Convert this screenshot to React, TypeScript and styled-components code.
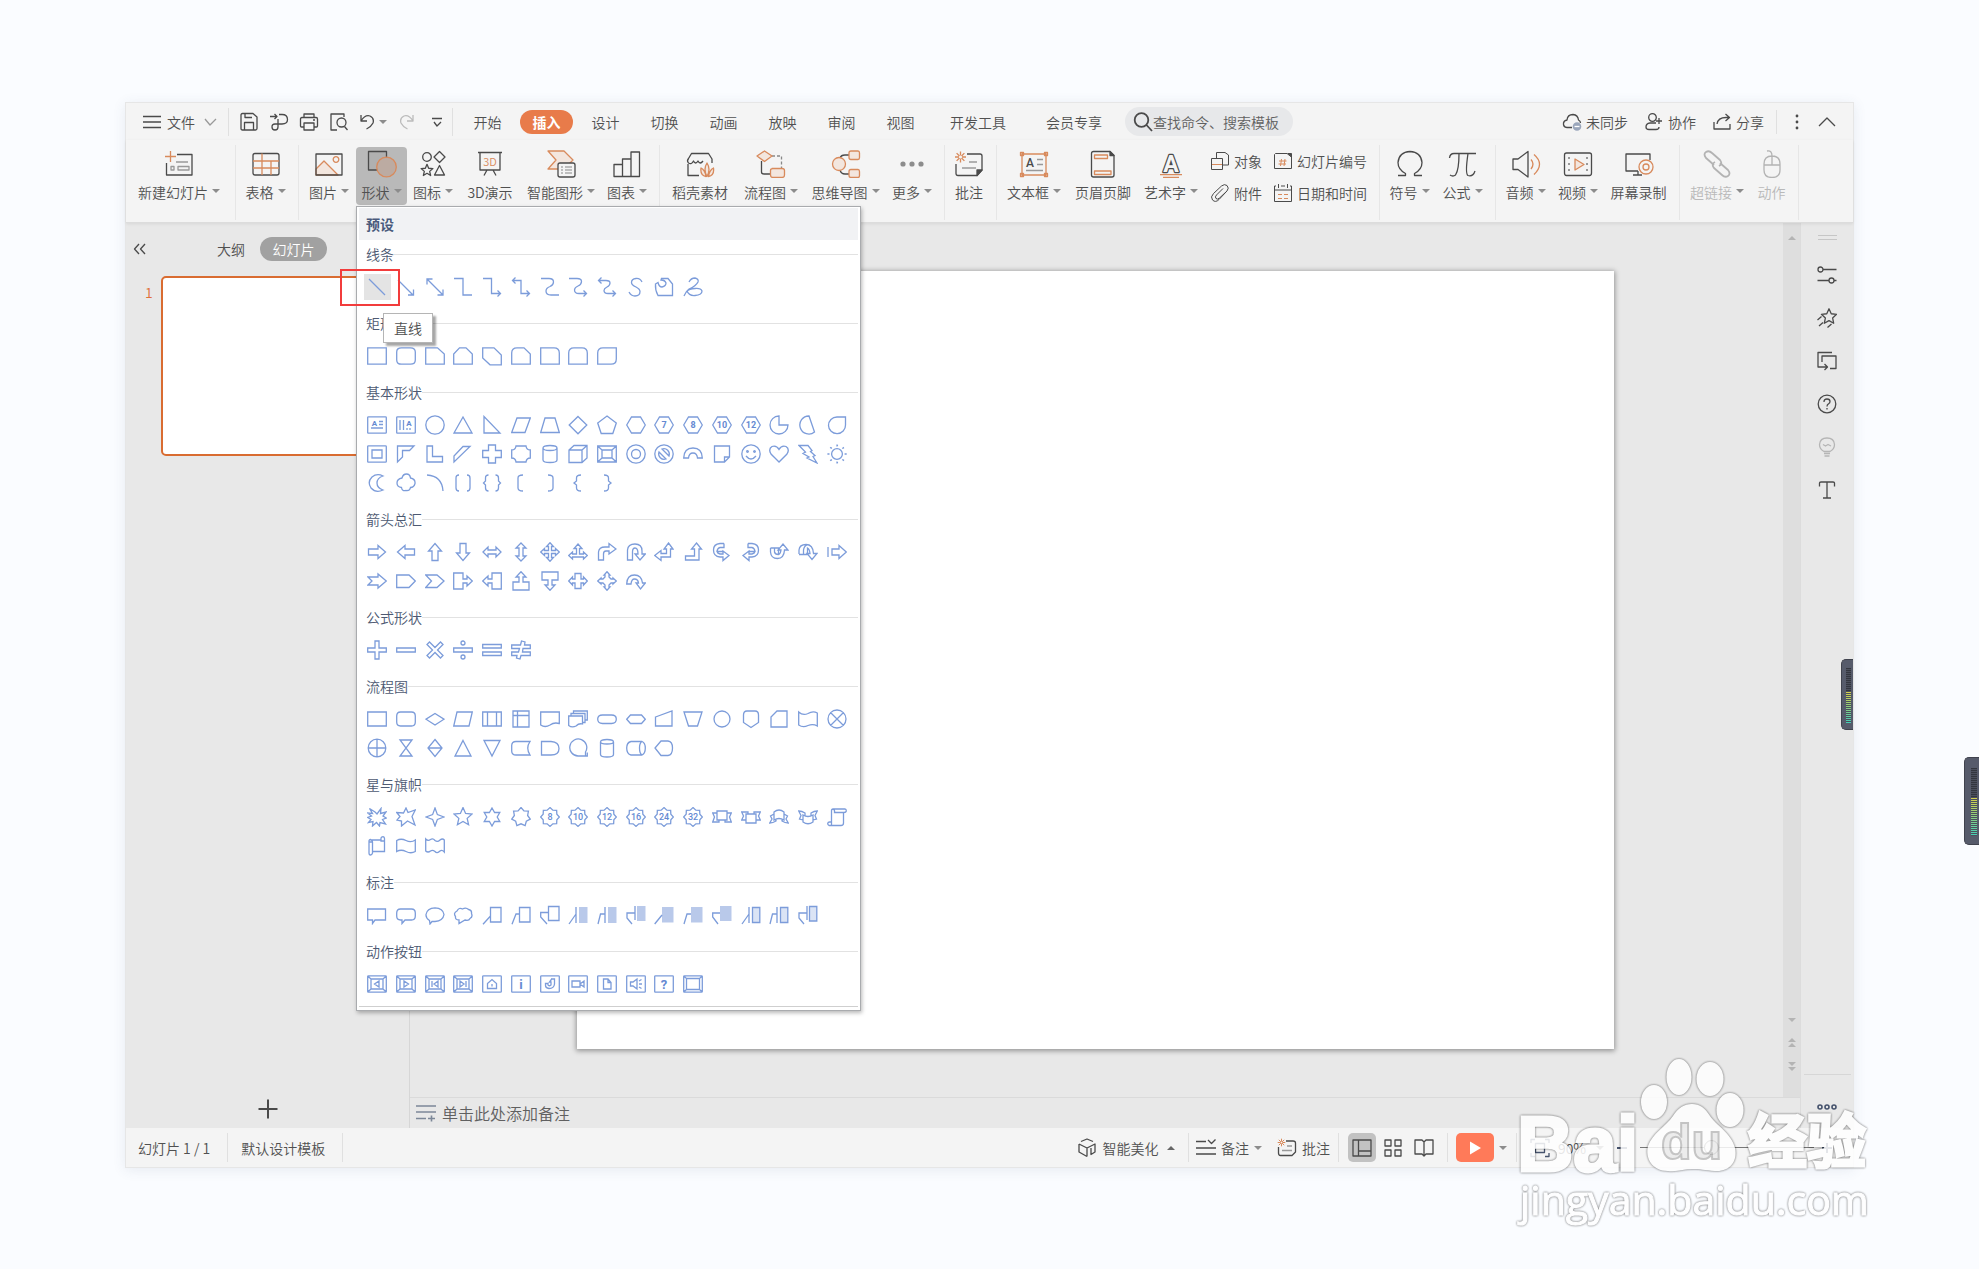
import React from 'react';
import styled, { createGlobalStyle, css } from 'styled-components';

const INK = '#4a4a4a';
const ORANGE = '#d88a5c';
const PEACH = '#f3e6de';
const BLUE = '#7c9cda';

const Global = createGlobalStyle`
  * { box-sizing: border-box; }
  body {
    margin: 0;
    background: #fafcff;
    font-family: "Noto Sans CJK SC", "Noto Sans", sans-serif;
    font-size: 14px;
    line-height: 20px;
    font-weight: 350;
    color: #505050;
  }
  button, input, select { font: inherit; color: inherit; }
  button { border: 0; padding: 0; background: none; cursor: pointer; }
  svg { display: block; flex: none; }
`;

/* ---------- page frame ---------- */

const Page = styled.div`
  position: relative;
  min-height: 100vh;
  padding: 102px 125px 101px;
  display: flex;
  overflow: hidden;
`;

const AppWindow = styled.div`
  position: relative;
  flex: 1;
  min-width: 0;
  display: flex;
  flex-direction: column;
  background: #f4f4f4;
  border: 1px solid #e6e6e6;
  box-shadow: 0 2px 12px rgba(60, 80, 120, 0.1);
`;

const Divider = styled.span<{ $h: number }>`
  flex: none;
  width: 1px;
  height: ${(p) => p.$h}px;
  background: #e0e0e0;
`;

const Caret = styled.span<{ $up?: boolean }>`
  flex: none;
  border: 4px solid transparent;
  ${(p) => (p.$up
    ? css`border-bottom-color: #666; border-top-width: 0;`
    : css`border-top-color: #8c8c8c; border-bottom-width: 0;`)}
`;

/* ---------- menu bar ---------- */

const MenuBar = styled.header`
  flex: none;
  display: flex;
  align-items: center;
  height: 37px;
  padding: 0 16px 0 17px;
`;

const FileButton = styled.button`
  display: flex;
  align-items: center;
  margin-right: 11px;
  gap: 8px;
  & > span { margin-left: -2px; }
`;

const QuickBar = styled.div`
  display: flex;
  padding-left: 5px;
`;

const QuickButton = styled.button<{ $wide?: boolean }>`
  display: flex;
  align-items: center;
  justify-content: center;
  gap: 4px;
  width: ${(p) => (p.$wide ? 38 : 30)}px;
  height: 28px;
`;

const Tabs = styled.nav`
  display: flex;
  padding: 0 3px 0 5px;
`;

const Tab = styled.button<{ $wide?: boolean; $active?: boolean }>`
  width: ${(p) => (p.$wide ? 96 : 59)}px;
  height: 24px;
  white-space: nowrap;
  ${(p) => p.$active && css`
    & > span {
      display: block;
      margin: 0 3px;
      line-height: 24px;
      border-radius: 12px;
      background: #e87b4a;
      color: #fff;
      font-weight: 700;
    }
  `}
`;

const SearchBox = styled.label`
  display: flex;
  align-items: center;
  width: 168px;
  height: 29px;
  padding-left: 8px;
  border-radius: 15px;
  background: #e7e8ea;
`;

const SearchInput = styled.input`
  flex: 1;
  min-width: 0;
  border: 0;
  padding: 0;
  background: none;
  outline: 0;
  &::placeholder { color: #606060; opacity: 1; }
`;

const AccountBar = styled.div<{ $inner?: boolean }>`
  display: flex;
  align-items: center;
  gap: ${(p) => (p.$inner ? 16 : 12)}px;
  margin-left: auto;
`;

const AccountButton = styled.button`
  display: flex;
  align-items: center;
  gap: 4px;
  white-space: nowrap;
`;

/* ---------- ribbon ---------- */

const Ribbon = styled.div`
  position: relative;
  z-index: 3;
  flex: none;
  display: flex;
  height: 83px;
  border-bottom: 1px solid #dcdcdc;
  box-shadow: 0 1px 3px rgba(0, 0, 0, 0.08);
`;

const Group = styled.div`
  display: flex;
  align-items: flex-start;
  margin: 5px 0 2px;
  padding: 2px 6px 0 3px;
  border-right: 1px solid #e6e6e6;
`;

const ToolSlot = styled.div`
  position: relative;
`;

const Tool = styled.button<{ $w: number; $active?: boolean; $off?: boolean }>`
  display: flex;
  flex-direction: column;
  align-items: center;
  gap: 4px;
  width: ${(p) => p.$w}px;
  height: 58px;
  padding-top: 3px;
  border-radius: 4px;
  white-space: nowrap;
  ${(p) => p.$active && css`background: #b9b9b9;`}
  ${(p) => p.$off && css`color: #b9b9b9;`}
`;

const ToolLabel = styled.span`
  display: flex;
  align-items: center;
  gap: 4px;
  ${Caret} { margin-top: -3px; }
`;

const SmallTools = styled.div`
  display: grid;
  grid-template-columns: 63px 100px;
  row-gap: 12px;
  margin: 4px 0 0 6px;
`;

const SmallTool = styled.button`
  display: flex;
  align-items: center;
  gap: 4px;
  height: 20px;
  white-space: nowrap;
`;

/* ---------- shape gallery ---------- */

const Gallery = styled.section`
  position: absolute;
  z-index: 5;
  top: 59px;
  left: 0;
  width: 505px;
  padding: 1px 2px 3px;
  background: #fff;
  border: 1px solid #a9abae;
  box-shadow: 1px 2px 4px rgba(0, 0, 0, 0.28);
`;

const GalleryTitle = styled.h2`
  margin: 0;
  padding: 0 7px;
  background: #f1f2f4;
  font-size: 14px;
  line-height: 32px;
  font-weight: 700;
  color: #4a5a7c;
`;

const SectionTitle = styled.h3`
  display: flex;
  align-items: center;
  margin: 0;
  padding-left: 7px;
  font-size: 14px;
  line-height: 28px;
  font-weight: 350;
  color: #4d5972;
  &::after {
    content: '';
    flex: 1;
    height: 1px;
    background: #e2e2e2;
  }
`;

const ShapeGrid = styled.div`
  display: grid;
  grid-template-columns: repeat(17, 1fr);
  row-gap: 1px;
  padding: 5px 7px 8px 4px;
`;

const ShapeButton = styled.button<{ $on?: boolean }>`
  display: flex;
  align-items: center;
  justify-content: center;
  height: 26px;
  margin: 1px;
  ${(p) => p.$on && css`background: #e4e4e4;`}
`;

const GalleryEnd = styled.div`
  height: 1px;
  background: #cfcfcf;
`;

const Marker = styled.div`
  position: absolute;
  top: 62px;
  left: -17px;
  width: 60px;
  height: 37px;
  border: 2px solid #f23c3c;
`;

const Tip = styled.div`
  position: absolute;
  top: 106px;
  left: 26px;
  padding: 4px 10px;
  background: #fff;
  border: 1px solid #b5b5b5;
  box-shadow: 3px 3px 2px rgba(0, 0, 0, 0.35);
`;

/* ---------- workspace ---------- */

const Body = styled.div`
  flex: 1;
  display: flex;
  background: #e8e8e8;
`;

const Outline = styled.aside`
  flex: none;
  display: flex;
  flex-direction: column;
  width: 284px;
  border-right: 1px solid #d6d6d6;
`;

const OutlineHead = styled.div`
  display: flex;
  align-items: center;
  height: 51px;
  padding-left: 7px;
`;

const Collapse = styled.button`
  width: 14px;
  height: 20px;
  margin-right: 70px;
`;

const OutlineTab = styled.button<{ $on?: boolean }>`
  height: 24px;
  ${(p) => p.$on && css`
    margin-left: 15px;
    width: 67px;
    border-radius: 12px;
    background: #a1a1a1;
    color: #fff;
  `}
`;

const ThumbRow = styled.div`
  display: flex;
  flex: 1;
  align-items: flex-start;
  gap: 8px;
  padding: 2px 8px 0 19px;
`;

const ThumbNumber = styled.span`
  width: 8px;
  padding-top: 6px;
  color: #e0703a;
`;

const Thumb = styled.button`
  flex: 1;
  aspect-ratio: 4 / 3;
  background: #fff;
  border: 2px solid #d96c31;
  border-radius: 5px;
`;

const AddSlide = styled.button`
  align-self: center;
  margin-bottom: 9px;
`;

const Stage = styled.main`
  flex: 1;
  min-width: 0;
  display: flex;
  flex-direction: column;
`;

const StageTop = styled.div`
  flex: 1;
  display: flex;
`;

const SlideArea = styled.div`
  flex: 1;
  display: flex;
  align-items: center;
  padding: 0 169px 0 167px;
`;

const Slide = styled.div`
  flex: 1;
  aspect-ratio: 4 / 3;
  background: #fff;
  box-shadow: 0 1px 5px 1px rgba(0, 0, 0, 0.36);
`;

const ScrollTrack = styled.div`
  display: flex;
  flex-direction: column;
  align-items: center;
  width: 17px;
  padding: 12px 0 26px;
  gap: 15px;
  background: #dedede;
  color: #b4b4b4;
  & > :first-child { margin-bottom: auto; }
`;

const Notes = styled.label`
  display: flex;
  align-items: center;
  gap: 6px;
  height: 31px;
  padding-left: 6px;
  border-top: 1px solid #dadada;
`;

const NotesInput = styled.input`
  flex: 1;
  border: 0;
  padding: 0;
  background: none;
  outline: 0;
  font-size: 16px;
  &::placeholder { color: #606060; opacity: 1; }
`;

const SideBar = styled.aside`
  flex: none;
  display: flex;
  flex-direction: column;
  align-items: center;
  width: 53px;
  border-left: 1px solid #dcdcdc;
`;

const SideGrip = styled.div`
  width: 19px;
  height: 5px;
  margin: 12px 0 13px;
  border: solid #c6c6c6;
  border-width: 1px 0;
`;

const SideButton = styled.button`
  display: flex;
  align-items: center;
  justify-content: center;
  width: 36px;
  height: 43px;
`;

const SideFoot = styled.div`
  display: flex;
  justify-content: center;
  width: 47px;
  height: 54px;
  margin-top: auto;
  padding-top: 28px;
  border-top: 1px solid #d6d6d6;
`;

/* ---------- status bar ---------- */

const StatusBar = styled.footer`
  flex: none;
  display: flex;
  align-items: center;
  height: 39px;
  padding: 0 21px 0 12px;
  white-space: nowrap;
`;

const StatusText = styled.span`
  padding-right: 17px;
  ${Divider} + & { padding-left: 13px; }
`;

const StatusTools = styled.div`
  display: flex;
  align-items: center;
  margin-left: auto;
`;

const StatusButton = styled.button<{ $w: number; $on?: boolean }>`
  display: flex;
  align-items: center;
  justify-content: center;
  gap: 5px;
  width: ${(p) => p.$w}px;
  height: 29px;
  border-radius: 5px;
  ${(p) => p.$on && css`background: #c2c2c2;`}
`;

const ViewSwitch = styled.div`
  display: flex;
  gap: 3px;
  padding: 0 9px;
`;

const PlayGroup = styled.div`
  display: flex;
  align-items: center;
  gap: 5px;
  padding: 0 9px 0 8px;
`;

const PlayButton = styled.button`
  display: flex;
  align-items: center;
  justify-content: center;
  width: 38px;
  height: 29px;
  border-radius: 5px;
  background: #ff7a59;
`;

const ZoomTools = styled.div`
  display: flex;
  align-items: center;
  gap: 8px;
  padding-left: 13px;
`;

const ZoomSelect = styled.select`
  appearance: none;
  width: 30px;
  border: 0;
  padding: 0;
  background: none;
`;

const ZoomRange = styled.input`
  appearance: none;
  width: 174px;
  height: 16px;
  margin: 0;
  background: linear-gradient(#777, #777) center / 100% 1px no-repeat;
  &::-webkit-slider-thumb {
    appearance: none;
    width: 15px;
    height: 15px;
    border: 1px solid #555;
    border-radius: 50%;
    background: #f4f4f4;
  }
`;

/* ---------- level meters ---------- */

const Meter = styled.div<{ $page?: boolean }>`
  position: absolute;
  z-index: 4;
  right: 0;
  top: ${(p) => (p.$page ? 757 : 556)}px;
  width: ${(p) => (p.$page ? 15 : 12)}px;
  height: ${(p) => (p.$page ? 88 : 71)}px;
  padding: ${(p) => (p.$page ? '10px 2px 8px 6px' : '8px 2px 6px 4px')};
  border: solid #40434e;
  border-width: 1px 0 1px 1px;
  border-radius: 5px 0 0 5px;
  background: #565b6b;
`;

const MeterBars = styled.div`
  height: 100%;
  background:
    repeating-linear-gradient(transparent 0 1px, #4b4f5c 1px 2px),
    linear-gradient(#33363f 0 43%, #d8d04a 43%, #8fce7c 70%, #43cdb8);
`;

/* ---------- watermark ---------- */

const Watermark = styled.div`
  position: absolute;
  z-index: 6;
  right: 104px;
  bottom: 36px;
  width: 358px;
  height: 176px;
  pointer-events: none;
  font-weight: 700;
  color: #fff;
  opacity: 0.85;
  filter: drop-shadow(0 0 1px rgba(0, 0, 0, 0.4)) drop-shadow(0 0 1px rgba(0, 0, 0, 0.3));
`;

const MarkWord = styled.span<{ $x: number; $y: number; $size: number; $latin?: boolean }>`
  position: absolute;
  left: ${(p) => p.$x}px;
  top: ${(p) => p.$y}px;
  font-size: ${(p) => p.$size}px;
  line-height: 1;
  -webkit-text-stroke: 3px #fff;
  ${(p) => p.$latin && css`font-family: "Liberation Sans", Arial, sans-serif;`}
`;

const MarkInner = styled(MarkWord)`
  color: #ebebeb;
  -webkit-text-stroke: 2px #bdbdbd;
`;

const MarkUrl = styled.span`
  position: absolute;
  left: 3px;
  bottom: 14px;
  font-family: "Open Sans", "Noto Sans", sans-serif;
  font-size: 41px;
  line-height: 40px;
  font-weight: 400;
  white-space: nowrap;
  -webkit-text-stroke: 1px #fff;
`;

const MarkPaw = styled.svg`
  position: absolute;
  left: 123px;
  top: 1px;
`;

/* ---------- line icon primitives ---------- */

type P = React.SVGProps<SVGPathElement>;
const K = (p: P) => <path {...p} />;
const O = (p: P) => <path stroke={ORANGE} {...p} />;

const Big = ({ children, color = INK }: { children: React.ReactNode; color?: string }) => (
  <svg width="30" height="28" viewBox="0 0 30 28" fill="none" stroke={color} strokeWidth="1.3" strokeLinejoin="round" aria-hidden>{children}</svg>
);
const Sm = ({ children, w = 20, color = INK }: { children: React.ReactNode; w?: number; color?: string }) => (
  <svg width={w} height="20" viewBox={`0 0 ${w} 20`} fill="none" stroke={color} strokeWidth="1.3" strokeLinejoin="round" aria-hidden>{children}</svg>
);

const n = (v: number) => Math.round(v * 100) / 100;
const circ = (x: number, y: number, r: number, ry = r) =>
  `M${x - r} ${y}a${r} ${ry} 0 1 0 ${2 * r} 0a${r} ${ry} 0 1 0 ${-2 * r} 0Z`;
const star = (k: number, R: number, r: number, rot = -90, cx = 10, cy = 10) => {
  const pts: string[] = [];
  for (let i = 0; i < k * 2; i += 1) {
    const a = ((rot + (i * 180) / k) * Math.PI) / 180;
    const d = i % 2 ? r : R;
    pts.push(`${n(cx + d * Math.cos(a))} ${n(cy + d * Math.sin(a))}`);
  }
  return `M${pts.join('L')}Z`;
};
const rays = (k: number, a: number, b: number, cx: number, cy: number) => {
  let d = '';
  for (let i = 0; i < k; i += 1) {
    const t = (i * 2 * Math.PI) / k;
    d += `M${n(cx + a * Math.cos(t))} ${n(cy + a * Math.sin(t))}L${n(cx + b * Math.cos(t))} ${n(cy + b * Math.sin(t))}`;
  }
  return d;
};

/* ---------- ribbon data ---------- */

const icons: Record<string, React.ReactNode> = {
  newSlide: <Big><K d="M13 4.500H28V25H2.500V13" /><K stroke="#999" d="M12 12H24M7 16.500H10V20H7ZM14 16.500H25V20H14Z" /><O d="M6.500 1V12M1 6.500H12" /></Big>,
  table: <Big><K d="M4 3.500H26Q28 3.500 28 5.500V23Q28 25 26 25H4Q2 25 2 23V5.500Q2 3.500 4 3.500Z" /><O d="M2 11H28M2 18H28M11 3.500V25M20 11V25" /></Big>,
  picture: <Big><O fill={PEACH} d="M2 19L10 11L24 25H2Z" /><O d={circ(22, 9.5, 2.8)} /><K d="M2 4H28V25H2Z" /></Big>,
  shapes: <Big><K fill="#b0b0b0" d="M1.500 1.500H19.500V20H1.500Z" /><O fill="#bcaba2" d={circ(19.5, 17, 9.8)} /></Big>,
  iconSet: <Big><K d={circ(9, 7, 4.3)} /><K d="M21.500 1.500L27 7 21.500 12.500 16 7Z" /><K d={star(5, 6.2, 2.8, -90, 9, 20.5)} /><K d="M21.500 15.500L26.500 25H16.500Z" /></Big>,
  board: <Big><K d="M3 2.500H27M5 2.500V20H25V2.500M12 20L9 25.500M18 20L21 25.500" /><text x="15" y="15.500" fontSize="11" textAnchor="middle" fill={ORANGE} stroke="none">3D</text></Big>,
  smart: <Big><O fill={PEACH} d="M2 1H18L27 10L18 19H2L10 10Z" /><K fill="#f4f4f4" d="M14 13H27Q29 13 29 15V25Q29 27 27 27H14Q12 27 12 25V15Q12 13 14 13Z" /><K strokeWidth="1" stroke="#888" d="M15 17H17M19 17H26M15 20H17M19 20H26M15 23H17M19 23H26" /></Big>,
  chart: <Big><K d="M2 14.500H10.500V26.500H2ZM10.500 9H19V26.500H10.500ZM19 2H27.500V26.500H19Z" /></Big>,
  shop: <Big><K d="M3 14V25.500H14M3.500 13Q1.500 11 3.500 8.500L6.500 3.500H23.500L27 9V13M3.500 13Q6.500 15 8.500 11Q10.500 15 13 11Q15 15 18 11" /><O fill={PEACH} d="M22 13Q26 19 22 26.500Q18 19 22 13ZM16 18Q20 20 21 26.500Q15 25.500 16 18ZM28.500 18Q24.500 20 23.500 26.500Q29.500 25.500 28.500 18Z" /></Big>,
  flow: <Big><K d="M5.500 11V22Q5.500 24 8 24H15" /><K strokeDasharray="3 2" stroke="#888" d="M16 6H25.500V18" /><O fill={PEACH} d="M8.500 1L16 6L8.500 11.500L1 6ZM16 18.500H26Q28.500 18.500 28.500 20.500V25Q28.500 27.500 26 27.500H17Q14.500 27.500 14.500 25V20.500Q14.500 18.500 17 18.500Z" /></Big>,
  mind: <Big><K d="M9 8Q10 5 14 5H19M9 20Q10 24 14 24H19" /><O fill={PEACH} d={`${circ(8, 14, 6.5)}M20 1H27Q28.500 1 28.500 3V7.500Q28.500 9.500 27 9.500H20Q18 9.500 18 7.500V3Q18 1 20 1ZM20 19.500H27Q28.500 19.500 28.500 21.500V25.500Q28.500 27.500 27 27.500H20Q18 27.500 18 25.500V21.500Q18 19.500 20 19.500Z`} /></Big>,
  more: <Big><K fill="#8c8c8c" stroke="none" d={circ(6, 14, 2.6) + circ(15, 14, 2.6) + circ(24, 14, 2.6)} /></Big>,
  comment: <Big><K d="M13 4H26Q28 4 28 6V20L23 25.500H4Q2 25.500 2 23.500V14" /><K fill={INK} d="M28 20H23V25.500Z" /><K stroke="#999" d="M15 12H23M8 18H22" /><O d={rays(8, 1.5, 5.5, 6.5, 7)} /></Big>,
  textBox: <Big><O d="M3 4H27V25H3ZM1.500 2.500H4.500V5.500H1.500ZM25.500 2.500H28.500V5.500H25.500ZM1.500 23.500H4.500V26.500H1.500ZM25.500 23.500H28.500V26.500H25.500Z" /><text x="11" y="17" fontSize="12" fontFamily="Roboto, sans-serif" fontWeight="500" textAnchor="middle" fill={INK} stroke="none">A</text><K stroke="#999" d="M18 9.500H24M18 14.500H24M7 20.500H24" /></Big>,
  header: <Big><K d="M5.500 1.500H22L26 5.500V25Q26 27 24 27H5.500Q3.500 27 3.500 25V3.500Q3.500 1.500 5.500 1.500Z" /><K fill={INK} d="M22 1.500V5.500H26Z" /><O d="M6.500 5H19.500V8.500H6.500ZM6.500 21H23V24.500H6.500Z" /></Big>,
  wordArt: <Big><text x="15" y="22" fontSize="23" fontFamily="Roboto, sans-serif" fontWeight="700" textAnchor="middle" fill="#f4f4f4" strokeWidth="2.4" paintOrder="stroke">A</text><O d="M4 24.700H26M7 27.300H23" /></Big>,
  omega: <Big><K d="M3 25.500H10.500V23.500Q3 19.500 3 12.500Q4 2 15 1.500Q26 2 27 12.500Q27 19.500 19.500 23.500V25.500H27" /></Big>,
  pi: <Big><K d="M1.500 8Q2 3.500 6 3.500H28M11 3.500Q11 20 7.500 25Q5 27 2 25M20 3.500Q17 24 20 25.500Q25 27 27 21" /></Big>,
  audio: <Big><K d="M2 9H7L17 1.500V27L7 19.500H2Z" /><O d="M20 9.500Q24 14 20 19M23 4.500Q34 14 23 24.500" /></Big>,
  video: <Big><K d="M3.500 3H26.500Q28.500 3 28.500 5V23Q28.500 25.500 26.500 25.500H3.500Q1.500 25.500 1.500 23V5Q1.500 3 3.500 3Z" /><O fill={PEACH} d="M12 9V20L21 14.500Z" /><K strokeWidth="2" stroke="#999" d="M5 8H7M5 14H7M5 20H7M23 8H25M23 14H25M23 20H25" /></Big>,
  record: <Big><K d="M26 10V4H2V21H14M14 21V25M9 25H18" /><O d={circ(22, 17, 7) + circ(22, 17, 3)} /></Big>,
  link: <Big color="#b3b3b3"><K strokeWidth="1.8" d="M12 15L4 8Q1 4 4 2Q7 0 10 3L18 10Q21 14 17 16M18 13L26 20Q29 24 26 26Q23 28 20 25L12 18Q9 14 13 12" /></Big>,
  mouse: <Big color="#b3b3b3"><K d="M15 6Q23 6 23 14V20Q23 27.500 15 27.500Q7 27.500 7 20V14Q7 6 15 6ZM7 15H23M15 6V15M10 1Q15 0 15 6" /></Big>,
};

interface ToolDef { label: string; icon: string; w: number; menu?: boolean; active?: boolean; off?: boolean }

const groups: ToolDef[][] = [
  [{ label: '新建幻灯片', icon: 'newSlide', w: 100, menu: true }],
  [{ label: '表格', icon: 'table', w: 53, menu: true }],
  [
    { label: '图片', icon: 'picture', w: 54, menu: true },
    { label: '形状', icon: 'shapes', w: 51, menu: true, active: true },
    { label: '图标', icon: 'iconSet', w: 52, menu: true },
    { label: '3D演示', icon: 'board', w: 62 },
    { label: '智能图形', icon: 'smart', w: 80, menu: true },
    { label: '图表', icon: 'chart', w: 52, menu: true },
  ],
  [
    { label: '稻壳素材', icon: 'shop', w: 74 },
    { label: '流程图', icon: 'flow', w: 68, menu: true },
    { label: '思维导图', icon: 'mind', w: 81, menu: true },
    { label: '更多', icon: 'more', w: 52, menu: true },
  ],
  [{ label: '批注', icon: 'comment', w: 42 }],
  [
    { label: '文本框', icon: 'textBox', w: 68, menu: true },
    { label: '页眉页脚', icon: 'header', w: 70 },
    { label: '艺术字', icon: 'wordArt', w: 66, menu: true },
  ],
  [
    { label: '符号', icon: 'omega', w: 53, menu: true },
    { label: '公式', icon: 'pi', w: 53, menu: true },
  ],
  [
    { label: '音频', icon: 'audio', w: 53, menu: true },
    { label: '视频', icon: 'video', w: 52, menu: true },
    { label: '屏幕录制', icon: 'record', w: 69 },
  ],
  [
    { label: '超链接', icon: 'link', w: 68, menu: true, off: true },
    { label: '动作', icon: 'mouse', w: 41, off: true },
  ],
];

const smallTools = [
  { label: '对象', icon: <Sm><K strokeWidth="1" d="M6.500 7V1.500H15L18.500 4V14H13M1.500 7.500H12.500V18.500H1.500Z" /><O strokeWidth="1" d="M2 13.500H12" /></Sm> },
  { label: '幻灯片编号', icon: <Sm><K strokeWidth="1" d="M2.500 2.500H14L18.500 6V17.500H1.500V3.500Z" /><K fill={INK} strokeWidth="1" d="M15 2.500H18.500V6Z" /><O strokeWidth="1" d="M8.500 8L7.500 15M12 8L11 15M6 10H13.500M5.500 13H13" /></Sm> },
  { label: '附件', icon: <Sm><K strokeWidth="1" d="M16 9L9 16.500Q5.500 20 2.500 17Q0 14 3.500 10.500L11.500 3Q14.500 .5 17 2.500Q19.500 5 17 8L9.500 15Q7.500 17 6 15.500Q4.500 14 6.500 12L13 5.500" /></Sm> },
  { label: '日期和时间', icon: <Sm><K strokeWidth="1" d="M3 3H1.500V18.500H18.500V3H17M8 3H12M5.500 1V5M14.500 1V5M1.500 7H18.500" /><O strokeWidth="1" d="M5 11.500H9M11 11.500H15M5 15.500H9M11 15.500H15" /></Sm> },
];

/* ---------- gallery data ---------- */

interface Shape { d: string; t?: string; f?: string; o?: string; small?: boolean; ty?: number }
const s = (d: string, t?: string, small?: boolean): Shape => ({ d, t, small });
const HEX = 'M5.500 2H14.500L19.300 10 14.500 18H5.500L.7 10Z';
const BOX = 'M1.500 1.800H18.500Q19.300 1.800 19.300 2.600V17.400Q19.300 18.200 18.500 18.200H1.500Q.7 18.200 .7 17.400V2.600Q.7 1.800 1.500 1.800Z';
const BEVEL = `${BOX}M4 5H16V15H4ZM.7 2L4 5M19.300 2L16 5M.7 18L4 15M19.300 18L16 15`;
const BADGE = star(8, 9.4, 7.4);

const sections: { title: string; shapes: Shape[] }[] = [
  {
    title: '线条',
    shapes: [
      s('M2 2L18 18'),
      s('M2 3L17 18M17.500 12.500V18H12'),
      s('M2 2L18 18M18 12.500V18H12.500M2 7.500V2H7.500'),
      s('M1 1.500H10V18H19'),
      s('M1 1.500H9.500V16.500H18.500M15.500 13.500L18.500 16.500 15.500 19.500'),
      s('M1.500 3.500H10V16.500H18.500M4.500 .5L1.500 3.500 4.500 6.500M15.500 13.500L18.500 16.500 15.500 19.500'),
      s('M1 1.500H9Q13.500 1.500 13.500 5Q13.500 8 10 9.500Q6 11 6 14Q6 18 11 18H19'),
      s('M1 1.500H9Q13.500 1.500 13.500 4.500Q13.500 7.500 10 9Q6.500 10.500 6.500 13Q6.500 16.500 11 16.500H18.500M15.500 13.500L18.500 16.500 15.500 19.500'),
      s('M1.500 3.500H9Q13 3.500 13 6Q13 8.500 10 10Q7 11.500 7 13.500Q7 16.500 11 16.500H18.500M4.500 .5L1.500 3.500 4.500 6.500M15.500 13.500L18.500 16.500 15.500 19.500'),
      s('M16 5Q14 1 10 1.500Q5.500 2 5.500 5.500Q5.500 8 10 10Q14 12 14 14.500Q14 19 9 19Q5 19 3 15'),
      s('M1.500 7L4 5.500Q5 10 8 10Q12 9 12 6Q11 3 7 3L7.500 1.500H14L18.500 7V18.500H4Q1 13 1.500 7Z'),
      s('M6 5Q8 1 12 1Q16 2 15 5Q13 9 6 12Q3 14 1 19M4 14Q6 19 12 18.500Q19 18 19 14Q18 11 12 11.500Q6 12 4 14'),
    ],
  },
  {
    title: '矩形',
    shapes: [
      s('M.7 1.800H19.300V18.200H.7Z'),
      s('M5.500 1.800H14.500Q19.300 1.800 19.300 6V14Q19.300 18.200 14.500 18.200H5.500Q.7 18.200 .7 14V6Q.7 1.800 5.500 1.800Z'),
      s('M.7 1.800H12.500L19.300 8V18.200H.7Z'),
      s('M6.500 1.800H13L19.300 8V18.200H.7V8Z'),
      s('M.7 1.800H12L19.300 9V18.800H8L.7 12Z'),
      s('M6 1.800H13L19.300 8V18.200H.7V7Q.7 1.800 6 1.800Z'),
      s('M.7 1.800H14Q19.300 1.800 19.300 7V18.200H.7Z'),
      s('M6 1.800H14Q19.300 1.800 19.300 7V18.200H.7V7Q.7 1.800 6 1.800Z'),
      s('M6 1.800H19.300V13Q19.300 18.200 14 18.200H.7V7Q.7 1.800 6 1.800Z'),
    ],
  },
  {
    title: '基本形状',
    shapes: [
      { d: `${BOX}M12 6.500H16M12 9.500H16M4 13H16`, t: 'A', o: '7.5', ty: 11 },
      { d: `${BOX}M4 5V15M7.500 5V15M11 13V15M14 13V15`, t: 'A', o: '13', ty: 11 },
      s(circ(10, 10, 9.2)),
      s('M10 2L19 18H1Z'),
      s('M2 1.500V18H18Z'),
      s('M6 3H19.300L14 17.500H.7Z'),
      s('M5 3H15L19.300 17.500H.7Z'),
      s('M10 1.500L18.800 10 10 18.800 1.200 10Z'),
      s('M10 1L19.300 8 15.800 18.500H4.200L.7 8Z'),
      s(HEX), s(HEX, '7'), s(HEX, '8'), s(HEX, '10'), s(HEX, '12'),
      s('M10 1A9 9 0 1 0 19 10H10Z'),
      s('M11 1A9 9 0 1 0 16.500 17Z'),
      s('M10 2H18.500V10A8.500 8.300 0 1 1 10 2Z'),
      s(`${BOX}M5 6H15V14H5Z`),
      s('M1.500 2H18L13.500 6.500H6.500V13L1.500 18Z'),
      s('M2 2H7.500V12.500H17.500V18H2Z'),
      s('M1 18V12L10 2.500H17Z'),
      s('M6.500 1H13.500V6.500H19.300V13.500H13.500V19H6.500V13.500H.7V6.500H6.500Z'),
      s('M5 2H15Q15.500 6 19.300 6V14Q15.500 14 15 18H5Q4.500 14 .7 14V6Q4.500 6 5 2Z'),
      s('M3 4Q3 1.500 10 1.500Q17 1.500 17 4V16Q17 18.500 10 18.500Q3 18.500 3 16ZM3 4Q3 6.500 10 6.500Q17 6.500 17 4'),
      s('M1 6L6 1.500H19V14L14 18.500H1ZM1 6H14V18.500M14 6L19 1.500'),
      s('M.7 2H19.300V18H.7ZM5 6H15V14H5ZM.7 2L5 6M19.300 2L15 6M.7 18L5 14M19.300 18L15 14'),
      s(circ(10, 10, 9.2) + circ(10, 10, 4.5)),
      s(`${circ(10, 10, 9.2)}M5 8A5.500 5.500 0 0 0 12 15ZM8 5A5.500 5.500 0 0 1 15 12Z`),
      s('M.7 14Q1 4 10 4Q19 4 19.300 14H14.500Q14 9 10 9Q6 9 5.500 14Z'),
      s('M2.500 2H17.500V13L12.500 18H2.500ZM12.500 18V13H17.500'),
      s(`${circ(10, 10, 9.2)}${circ(6.5, 7.5, .8)}${circ(13.5, 7.5, .8)}M5 12Q10 18 15 12`),
      s('M10 18L2 10Q-1 5 3 2.500Q7.500 1 10 5.500Q12.500 1 17 2.500Q21 5 18 10Z'),
      s('M1 1.500H10L14 6.500L12.500 7.500L17 11.500L15 12.500L19 19L9 14L11 13L5 9.500L7.500 8Z'),
      { d: circ(10, 10, 5.4) + rays(8, 7.6, 9.6, 10, 10) + rays(8, 7.9, 9.3, 10.4, 10) },
      s('M16 3Q10 0 5 4Q0 9 4 15Q9 20.500 16 17Q10 15 10 10Q10 5 16 3Z'),
      s('M6 5Q7 1 10.500 1Q14 1 14.500 5Q19.500 6 19 10.500Q18 14.500 14.500 14.500Q14 18 10 17.500Q6 18.500 5.500 14.500Q1 14 1 10Q1 6 6 5Z'),
      s('M2 2Q17 3 18 18'),
      s('M6 2Q3 2 3 5V15Q3 18 6 18M14 2Q17 2 17 5V15Q17 18 14 18'),
      s('M6.500 2Q3.500 2 3.500 5V8L1.500 10L3.500 12V15Q3.500 18 6.500 18M13.500 2Q16.500 2 16.500 5V8L18.500 10L16.500 12V15Q16.500 18 13.500 18'),
      s('M12 2Q7 2 7 5V15Q7 18 12 18'),
      s('M8 2Q13 2 13 5V15Q13 18 8 18'),
      s('M13 2Q8.500 2 8.500 5V8L6 10L8.500 12V15Q8.500 18 13 18'),
      s('M7 2Q11.500 2 11.500 5V8L14 10L11.500 12V15Q11.500 18 7 18'),
    ],
  },
  {
    title: '箭头总汇',
    shapes: [
      s('M1.500 7H11V3.500L18.500 10 11 16.500V13H1.500Z'),
      s('M18.500 7H9V3.500L1.500 10 9 16.500V13H18.500Z'),
      s('M7 18.500V9H3.500L10 1.500 16.500 9H13V18.500Z'),
      s('M7 1.500V11H3.500L10 18.500 16.500 11H13V1.500Z'),
      s('M1 10L6 5V8H14V5L19 10 14 15V12H6V15Z'),
      s('M10 1L15 6H12V14H15L10 19 5 14H8V6H5Z'),
      s('M10 .7L13.500 4.500H11.500V8.500H15.500V6.500L19.300 10L15.500 13.500V11.500H11.500V15.500H13.500L10 19.300L6.500 15.500H8.500V11.500H4.500V13.500L.7 10L4.500 6.500V8.500H8.500V4.500H6.500Z'),
      s('M10 2L14 6.500H11.500V12H15.500V10L19.300 13.500L15.500 17V15H4.500V17L.7 13.500L4.500 10V12H8.500V6.500H6Z'),
      s('M1.500 18V10Q2 5 8 5H12V1.500L19 7L12 12V9H9Q6.500 9 6.500 12V18Z'),
      s('M1.500 18V8Q2 2 9 2Q16 2 16 9V12H19.300L14 18L9 12H12Q12 6 9 6Q6.500 6 6.500 10V18ZM6.500 11V14'),
      s('M14.500 1L19 7H16.500V15H7V18.500L.7 13.500L7 8.500V11.500H12.500V7H10Z'),
      s('M13.500 1L18.500 7H16V18H2.500V14H11.500V7H8.500Z'),
      s('M12 1.500H8Q1.500 2 1.500 8Q1.500 14.500 8 15H11V18.500L17 13.500L11 9V12H8Q5.500 11.500 5 9.500H12M12 1.500V5.500H8Q5.500 6 5 9.500'),
      s('M7 1.500H11Q17.500 2 17.500 8Q17.500 14.500 11 15H8V18.500L2 13.500L8 9V12H11Q13.500 11.500 14 9.500H7M7 1.500V5.500H11Q13.500 6 14 9.500'),
      s('M1.500 6V10Q2 16.500 8.500 16.500Q15 16.500 15.500 8H19L14 2L9 8H12Q11.500 12 9.500 12.500V6H5.500V10Q6 12.500 9.500 12.500M1.500 6H5.500'),
      s('M1 12V8Q1.500 2.500 8 2.500Q15 2.500 15.500 11.500H19L14 17.500L9 11.500H12Q11.500 7 9.500 6V12.500H5.500V8Q6 4 9.500 2.600M1 12.500H5.500'),
      s('M1 5V15M5 7H12V3.500L19.300 10L12 16.500V13H5Z'),
      s('M1 6H11V3L19.300 10L11 17V14H1L5 10Z'),
      s('M.7 4H13L19.300 10L13 16.500H.7Z'),
      s('M.7 4H12L19 10L12 16.500H.7L6.500 10Z'),
      s('M.7 2H10V8H14V5L19.300 10L14 15V12H10V18H.7Z'),
      s('M19.300 2H10V8H6V5L.7 10L6 15V12H10V18H19.300Z'),
      s('M2 19V11H8V6H5L10 .7L15 6H12V11H18V19Z'),
      s('M2 1V9H8V14H5L10 19.300L15 14H12V9H18V1Z'),
      s('M7 2.500H13V8H15.500V6L19.300 10L15.500 14V12H13V17.500H7V12H4.500V14L.7 10L4.500 6V8H7Z'),
      s('M10 .7L13 4H12V6L14 8H16V7L19.300 10L16 13V12H14L12 14V16H13L10 19.300L7 16H8V14L6 12H4V13L.7 10L4 7V8H6L8 6V4H7Z'),
      s('M.7 13Q1 4 8.500 4Q15.500 4 16.500 12H19.300L14.500 18L10 12H12.500Q12 8 8.500 8Q5.500 8 5 13Z'),
    ],
  },
  {
    title: '公式形状',
    shapes: [
      s('M8 1H12V8H19.300V12H12V19H8V12H.7V8H8Z'),
      s('M.7 8H19.300V12H.7Z'),
      s('M4.500 2L10 7.500L15.500 2L18 4.500L12.500 10L18 15.500L15.500 18L10 12.500L4.500 18L2 15.500L7.500 10L2 4.500Z'),
      s(`M.7 8H19.300V12H.7Z${circ(10, 3, 2)}${circ(10, 17, 2)}`),
      s('M.7 4.500H19.300V8H.7ZM.7 12H19.300V15.500H.7Z'),
      s('M.7 5H9.500L10.500 1L14 2L13.500 5H19.300V8.500H12L11.500 12H19.300V15.500H10L9 19L5.500 18L6 15.500H.7V12H7.500L8.500 8.500H.7Z'),
    ],
  },
  {
    title: '流程图',
    shapes: [
      s('M.7 3H19.300V17H.7Z'),
      s('M4.500 3H15.500Q19.300 3 19.300 7V13Q19.300 17 15.500 17H4.500Q.7 17 .7 13V7Q.7 3 4.500 3Z'),
      s('M10 4.500L19 10.200L10 16L1 10.200Z'),
      s('M4 3H19.300L16 17H.7Z'),
      s('M.7 3H19.300V17H.7ZM5.500 3V17M14.500 3V17'),
      s('M2 2H18V18H2ZM6.500 2V18M2 6.500H18'),
      s('M.7 3H19.300V14.500Q14 13 10 16Q5 19 .7 16Z'),
      s('M.7 7H14.500V15Q11 14 8 17Q4 19 .7 16.500ZM3 7V4.500H17V13.500H14.500M5.500 4.500V2H19.300V11H17'),
      s('M5.500 6H14.500Q19.300 6 19.300 10Q19.300 14.500 14.500 14.500H5.500Q.7 14.500 .7 10Q.7 6 5.500 6Z'),
      s('M4.500 6H15.500L19.300 10.200L15.500 14.500H4.500L.7 10.200Z'),
      s('M1.500 8L18 2V17H1.500Z'),
      s('M1 3H19L14.500 17H5.500Z'),
      s(circ(10, 10, 8)),
      s('M6 2H14Q17.500 2 17.500 6V13.500L10 18.500L2.500 13.500V6Q2.500 2 6 2Z'),
      s('M8 2H18V18H2V8Z'),
      s('M.7 3Q5 7 10 4.500Q15 1.500 19.300 4V17Q15 14.500 10 16.500Q5 19 .7 16Z'),
      s(`${circ(10, 10, 9)}M3.500 3.500L16.500 16.500M16.500 3.500L3.500 16.500`),
      s(`${circ(10, 10, 8.8)}M1 10H19M10 1V19`),
      s('M4 2H16L4 18H16Z'),
      s('M10 1.500L17 10L10 18.500L3 10ZM3 10H17'),
      s('M10 2.500L18 18H2Z'),
      s('M2 2.500H18L10 18Z'),
      s('M5 3.500H19Q14.500 10 19 17H5Q.7 17 .7 13V7.500Q.7 3.500 5 3.500Z'),
      s('M1.500 3.500H11Q19 4 19 10.500Q19 17 11 17H1.500Z'),
      s('M10 18A8.500 8.500 0 1 1 17.500 14V18ZM10 18H19.300V14.500'),
      s('M3.500 4Q3.500 1.500 10 1.500Q16.500 1.500 16.500 4V16.500Q16.500 19 10 19Q3.500 19 3.500 16.500ZM3.500 4Q3.500 6 10 6Q16.500 6 16.500 4'),
      s('M5 3.500H16Q19.300 5 19.300 10Q19.300 15.500 16 17H5Q.7 16 .7 10Q.7 4.500 5 3.500ZM16 3.500Q13.500 5 13.500 10Q13.500 15.500 16 17'),
      s('M7 3H14Q18.500 3.500 18.500 10Q18.500 17 14 17.500H7L1 10Z'),
    ],
  },
  {
    title: '星与旗帜',
    shapes: [
      s('M8 5L10 7L14 1.500L13.500 6.500L19 5L16 9L19.300 11L15.500 12.500L18.500 17L13 15.500L12.500 19L9.500 15.500L5.500 19L6 14.500L1.500 15.500L4 12.500L.7 10.500L4.500 9L.7 6L5.500 6.500L2.500 1.500Z'),
      s('M10 1L12 5.500L19.300 3L16 9.500L19 18L11.500 14L5.500 19L5.500 14L1 13L4 9.500L.7 5.500L7.500 6Z'),
      s(star(4, 9, 3.4)),
      s(star(5, 9.5, 4.4)),
      s(star(6, 9, 5.2)),
      s(star(7, 9.5, 6.8)),
      s(BADGE, '8', true), s(BADGE, '10', true), s(BADGE, '12', true),
      s(BADGE, '16', true), s(BADGE, '24', true), s(BADGE, '32', true),
      s('M5 4H15V13H5ZM5 6H.7L2.500 10L.7 15H7V13M15 6H19.300L17.500 10L19.300 15H13V13'),
      s('M5 7H15V16H5ZM5 13H.7L2.500 9L.7 5H7V7M15 13H19.300L17.500 9L19.300 5H13V7'),
      s('M5 5Q10 1 15 5V13Q10 10 5 13ZM5 7L1.500 9L3 12L.7 16Q4 16 7 14V12.500M15 7L18.500 9L17 12L19.300 16Q16 16 13 14V12.500'),
      s('M5 8Q10 11 15 8V15Q10 18.500 5 15ZM5 13L1.500 12L3 8.500L.7 4Q4 4 7 6V8.500M15 13L18.500 12L17 8.500L19.300 4Q16 4 13 6V8.500'),
      s('M6 2H18Q19.300 2 19.300 4Q19 5.500 17 5.500H16.500V16Q16.500 18.500 14 18.500H2Q.7 18 .7 16.500Q1 15 2.500 15H4.500V4Q4.500 2 6 2ZM6 2Q8 2.500 7.500 5.500H16.500M4.500 15V18'),
      s('M5 4H14V2Q14.500 .7 16 .7Q17.500 1 17.500 2.500V15.500H5.500V17Q5 19 3.500 19Q2 19 2 17V5Q2 3.500 3.500 3.500Q5.500 4 5.500 6V15.500M14 4V5H17M2 6H5.500'),
      s('M.7 4.500Q5 2 10 4.500Q15 7 19.300 4V15.500Q15 18 10 15.500Q5 13 .7 15.500Z'),
      s('M.7 3Q3 5.500 5.500 3.500Q8 2 10 4.500Q12.500 6.500 15 4Q17.500 2 19.300 4V16Q17 13.500 15 15Q12 18 10 15.500Q7.500 13.500 5.500 15Q3 17 .7 15Z'),
    ],
  },
  {
    title: '标注',
    shapes: [
      s('M.7 4H18.500V15H8L5.500 18.500V15H.7Z'),
      s('M4.500 4H15.500Q19.300 4 19.300 8V11Q19.300 15 15.500 15H9L6 18.500V15H4.500Q.7 15 .7 11V8Q.7 4 4.500 4Z'),
      s('M7 16.500L5 19L4.500 15.500Q.7 13 1 9.500Q2 3 10 2.800Q18 3 19 9.500Q18 16 10 16.500Z'),
      s('M4 6Q6 2 9.500 4Q13 2 15.500 4.500Q19 5 18.500 8.500Q20 12 17 13.500Q16 16 12 15L6 18.500V15Q2 15 2.500 11.500Q0 8 4 6Z'),
      s('M8.500 2.500H19V17H8.500ZM8.500 11L1 19.300'),
      s('M8.500 2.500H19V17H8.500ZM8.500 9H5L1 19.300'),
      s('M8.500 1.500H19V15.500H8.500ZM8.500 7.500H.7V12L7 19'),
      { d: 'M8 2V18M1 19L8 9', f: 'M11 2H19.500V18H11Z' },
      { d: 'M8 2V18M1 19L3.500 9H8', f: 'M11 2H19.500V18H11Z' },
      { d: 'M9 1V15M9 8H1V13L6 19', f: 'M11 1H19.500V16H11Z' },
      { d: 'M.7 19L8 10', f: 'M8 2H19.500V17.500H8Z' },
      { d: 'M1 19L4 9H8', f: 'M8 2H19.500V17.500H8Z' },
      { d: 'M8 8H.7V12L6 19', f: 'M8 1H19.500V16H8Z' },
      { d: 'M8 2V18M1 19L8 9', o: 'M11.500 2.500H18.800V17.500H11.500Z' },
      { d: 'M8 2V18M1 19L3.500 9H8', o: 'M11.500 2.500H18.800V17.500H11.500Z' },
      { d: 'M9 1V15M9 8H1V13L6 19', o: 'M11.500 1.500H18.800V16H11.500Z' },
    ],
  },
  {
    title: '动作按钮',
    shapes: [
      s(`${BEVEL}M12 7V13L7.500 10Z`),
      s(`${BEVEL}M8 7V13L12.500 10Z`),
      s(`${BEVEL}M13 7V13L9 10ZM7 7V13`),
      s(`${BEVEL}M7 7V13L11 10ZM13 7V13`),
      s(`${BOX}M5.500 9.500L10 5.500L14.500 9.500V14.500H5.500ZM10 10V12.500`),
      { d: BOX, t: 'i', o: '10', ty: 15 },
      s(`${BOX}M11 5H14.500V10Q14 14.500 9 14.500Q5.500 14 5.500 11.500V9.500H8V11Q9 12.500 11 11V8H9.500L12 4.500`),
      s(`${BOX}M4 7H12V13H4ZM12 10L16 7V13L12 10`),
      s(`${BOX}M6.500 5H11L14 8.500V15H6.500ZM11 5V8.500H14`),
      s(`${BOX}M4.500 8H7L11 5V15L7 12H4.500ZM13 7L15.500 5.500M13 10H16M13 13L15.500 14.500`),
      { d: BOX, t: '?', o: '10', ty: 15 },
      s(`${BOX}M3.500 4.500H16.500V15.500H3.500ZM.7 2L3.500 4.500M19.300 2L16.500 4.500M.7 18L3.500 15.500M19.300 18L16.500 15.500`),
    ],
  },
];

const ShapeIcon = ({ shape }: { shape: Shape }) => {
  const solo = shape.ty !== undefined;
  return (
    <svg width="20" height="20" viewBox="0 0 20 20" fill="none" stroke={BLUE} strokeWidth="1.3" aria-hidden>
      {shape.f && <path d={shape.f} fill="#b9c9ea" stroke="none" />}
      {shape.o && !solo && <path d={shape.o} fill="#dbe4f5" />}
      <path d={shape.d} />
      {shape.t && (
        <text
          x={solo ? shape.o : 10}
          y={solo ? shape.ty : 13}
          fontSize={solo ? (shape.ty === 15 ? 13 : 8) : 9}
          fontFamily="Roboto, sans-serif"
          fontWeight={shape.small ? 500 : 700}
          textAnchor="middle"
          fill="#6489d2"
          stroke="none"
        >
          {shape.t}
        </text>
      )}
    </svg>
  );
};

const ShapeGallery = () => (
  <Gallery>
    <GalleryTitle>预设</GalleryTitle>
    {sections.map((sec, si) => (
      <div key={sec.title}>
        <SectionTitle>{sec.title}</SectionTitle>
        <ShapeGrid>
          {sec.shapes.map((shape, i) => (
            <ShapeButton key={i} type="button" aria-label={`${sec.title} ${i + 1}`} $on={si === 0 && i === 0}>
              <ShapeIcon shape={shape} />
            </ShapeButton>
          ))}
        </ShapeGrid>
      </div>
    ))}
    <GalleryEnd />
    <Marker />
    <Tip role="tooltip">直线</Tip>
  </Gallery>
);

const RibbonTool = ({ tool }: { tool: ToolDef }) => (
  <ToolSlot>
    <Tool type="button" $w={tool.w} $active={tool.active} $off={tool.off}>
      {icons[tool.icon]}
      <ToolLabel>
        {tool.label}
        {tool.menu && <Caret />}
      </ToolLabel>
    </Tool>
    {tool.active && <ShapeGallery />}
  </ToolSlot>
);

const quick = [
  { name: '保存', icon: <Sm><K d="M3.500 1.500H14L18 5V16.500Q18 18 16.500 18H3.500Q2 18 2 16.500V3Q2 1.500 3.500 1.500ZM5.500 18V10.500H14.500V18M6 1.500V5.500H13" /></Sm> },
  { name: '输出', icon: <Sm><K d="M1 4.500H8M5.500 2L8 4.500L5.500 7M10 2.500H13Q18.500 2.500 18.500 7.500Q18.500 12 13 12H6Q3 12 3 15Q3 18 6 18Q9 18 9 15V7" /></Sm> },
  { name: '打印', icon: <Sm><K d="M5 5.500V2H15V5.500M5 15H2.500Q1.500 15 1.500 14V7Q1.500 5.500 3 5.500H17Q18.500 5.500 18.500 7V14Q18.500 15 17.500 15H15M5 11H15V18H5ZM14 8H16" /></Sm> },
  { name: '打印预览', icon: <Sm><K d="M8 18H2V2H15V5M18.500 18L15.500 14.500" /><K d={circ(12.5, 10.5, 4.5)} /></Sm> },
];

const sideIcons = [
  { name: '属性', icon: <Sm><K d={`${circ(3.5, 4.5, 2.5)}M6 4.500H19.500M.5 15.500H12M17 15.500H19.500${circ(14.5, 15.5, 2.5)}`} /></Sm> },
  { name: '动画', icon: <Sm><K d={`${star(5, 8, 3.8, -90, 12, 8.8)}M.5 12L4.500 8.500M2 18L6 14.500M10.500 19.500L14.500 16`} /></Sm> },
  { name: '切换', icon: <Sm><K d="M15 1.500H1V16H10M7.500 13L10.500 16L7.500 19M5 11V5H19V17.500H13" /></Sm> },
  { name: '帮助', icon: <Sm><K d={`${circ(10, 10, 8.8)}M7 8Q7 5 10 5Q13 5 13 7.500Q13 9 11.500 9.800Q10 10.500 10 12.500M10 14V15.500`} /></Sm> },
  { name: '提示', icon: <Sm color="#b5b5b5"><K d="M7 14.500Q2.500 12 2.500 7.500Q3 1 10 1Q17 1 17.500 7.500Q17.500 12 13 14.500ZM7 16.500H13M7.500 19H12.500M6 7.500L8.500 9L11 7.500L14 9" /></Sm> },
  { name: '文字', icon: <Sm><K d="M2.500 6.500V3Q2.500 2 4 2H16Q17.500 2 17.500 3V6.500M10 2V18M6 18H14" /></Sm> },
];

export default function App() {
  return (
    <>
      <Global />
      <Page>
        <AppWindow>
          <MenuBar>
            <FileButton type="button">
              <Sm w={18}><K d="M0 4.500H18M0 10H18M0 15.500H18" /></Sm>
              <span>文件</span>
              <Sm w={14} color="#999"><K d="M2 7L7 13L13 7" /></Sm>
            </FileButton>
            <Divider $h={28} />
            <QuickBar>
              {quick.map((q) => <QuickButton key={q.name} type="button" aria-label={q.name}>{q.icon}</QuickButton>)}
              <QuickButton type="button" aria-label="撤销" $wide><Sm w={16}><K d="M2 3V9H8M2 9Q6 2.500 11 4Q15.500 6 14 11Q12 15 7.500 17" /></Sm><Caret /></QuickButton>
              <QuickButton type="button" aria-label="恢复"><Sm w={16} color="#bbb"><K d="M14 3V9H8M14 9Q10 2.500 5 4Q.5 6 2 11Q4 15 8.500 17" /></Sm></QuickButton>
              <QuickButton type="button" aria-label="自定义"><Sm w={12}><K d="M1 6.500H11M3 10L6 14L10 10" /></Sm></QuickButton>
            </QuickBar>
            <Divider $h={28} />
            <Tabs>
              {['开始', '插入', '设计', '切换', '动画', '放映', '审阅', '视图', '开发工具', '会员专享'].map((t) => (
                <Tab key={t} type="button" $wide={t.length > 2} $active={t === '插入'}><span>{t}</span></Tab>
              ))}
            </Tabs>
            <SearchBox>
              <Sm><K strokeWidth="1.8" d={`${circ(8.5, 8, 6.8)}M13.500 13L19 19`} /></Sm>
              <SearchInput aria-label="搜索" placeholder="查找命令、搜索模板" />
            </SearchBox>
            <AccountBar>
              <AccountBar $inner>
                <AccountButton type="button">
                  <Sm><K d="M10 15.500H5Q1 15 1.500 11Q2 8.500 5 8Q5.500 2.500 11 2.500Q16 3 16.500 8Q18.500 9 18.500 11" /><K stroke="none" fill="#9aa6bb" d={circ(15, 14.5, 4.3)} /><K stroke="#fff" d="M12.500 14.500H17.500" /></Sm>未同步
                </AccountButton>
                <AccountButton type="button">
                  <Sm><K d={`${circ(8.5, 5.5, 3.8)}M12 11H6Q2 11.500 2 15Q2 17.500 5 17.500H12Q15 17.500 15 15M12 9H18M15 6V12`} /></Sm>协作
                </AccountButton>
                <AccountButton type="button">
                  <Sm><K d="M2 10V17H18V12M5 12Q6 5.500 14 5.500H17M13.500 2L17.500 5.500L13.500 9" /></Sm>分享
                </AccountButton>
              </AccountBar>
              <Divider $h={24} />
              <AccountButton type="button" aria-label="更多选项"><Sm w={16}><K stroke="none" fill={INK} d={circ(8, 4, 1.4) + circ(8, 10, 1.4) + circ(8, 16, 1.4)} /></Sm></AccountButton>
              <AccountButton type="button" aria-label="收起功能区"><Sm><K d="M2 14L10 6L18 14" /></Sm></AccountButton>
            </AccountBar>
          </MenuBar>

          <Ribbon>
            {groups.map((g, gi) => (
              <Group key={gi}>
                {g.map((t) => <RibbonTool key={t.label} tool={t} />)}
                {gi === 5 && (
                  <SmallTools>
                    {smallTools.map((t) => <SmallTool key={t.label} type="button">{t.icon}{t.label}</SmallTool>)}
                  </SmallTools>
                )}
              </Group>
            ))}
          </Ribbon>

          <Body>
            <Outline>
              <OutlineHead>
                <Collapse type="button" aria-label="折叠"><Sm w={14}><K d="M6 5L1.500 10L6 15M12 5L7.500 10L12 15" /></Sm></Collapse>
                <OutlineTab type="button">大纲</OutlineTab>
                <OutlineTab type="button" $on>幻灯片</OutlineTab>
              </OutlineHead>
              <ThumbRow>
                <ThumbNumber>1</ThumbNumber>
                <Thumb type="button" aria-label="幻灯片 1" />
              </ThumbRow>
              <AddSlide type="button" aria-label="新建幻灯片"><Sm><K strokeWidth="2" d="M10 .5V19.500M.5 10H19.500" /></Sm></AddSlide>
            </Outline>
            <Stage>
              <StageTop>
                <SlideArea><Slide /></SlideArea>
                <ScrollTrack>
                  <svg width="8" height="6" viewBox="0 0 8 6" fill="currentColor"><path d="M4 1L8 5H0Z" /></svg>
                  <svg width="8" height="5" viewBox="0 0 8 5" fill="currentColor"><path d="M4 4L8 0H0Z" /></svg>
                  <svg width="8" height="9" viewBox="0 0 8 9" fill="currentColor"><path d="M4 0L8 4H0ZM4 5L8 9H0Z" /></svg>
                  <svg width="8" height="9" viewBox="0 0 8 9" fill="currentColor"><path d="M4 4L8 0H0ZM4 9L8 5H0Z" /></svg>
                </ScrollTrack>
              </StageTop>
              <Notes>
                <Sm color="#7c8798"><K strokeWidth="1.6" d="M0 3H20M0 9H20M0 15.500H10M12 15.500H19M15.500 12.500V18.500" /></Sm>
                <NotesInput aria-label="备注" placeholder="单击此处添加备注" />
              </Notes>
            </Stage>
            <SideBar>
              <SideGrip />
              {sideIcons.map((b) => <SideButton key={b.name} type="button" aria-label={b.name}>{b.icon}</SideButton>)}
              <SideFoot>
                <Sm color="#46536d"><K strokeWidth="1.6" d={circ(3, 4, 2) + circ(10, 4, 2) + circ(17, 4, 2)} /></Sm>
              </SideFoot>
            </SideBar>
          </Body>

          <StatusBar>
            <StatusText>幻灯片 1 / 1</StatusText>
            <Divider $h={29} />
            <StatusText>默认设计模板</StatusText>
            <Divider $h={29} />
            <StatusTools>
              <StatusButton type="button" $w={124}>
                <Sm><K d="M4 3.500L10 1L16 3.500M2 6V14L10 18.500M2 6L10 10L18 6V14L14 16.500V10M10 10V18.500" /></Sm>智能美化&nbsp;<Caret $up />
              </StatusButton>
              <Divider $h={29} />
              <StatusButton type="button" $w={80}>
                <Sm><K d="M0 3.500H10M12 2L15.500 5.500L19.500 1.500M0 10H20M0 16H20" /></Sm>备注<Caret />
              </StatusButton>
              <StatusButton type="button" $w={69}>
                <Sm><K d="M9 3H16Q18.500 3 18.500 5V14L15 17.500H3.500Q1.500 17.500 1.500 15V9" /><K stroke="#999" d="M10 8H15M5 12.500H15" /><O strokeWidth="1" d={rays(8, .8, 3.8, 4.5, 4.5)} /></Sm>批注
              </StatusButton>
              <Divider $h={29} />
              <ViewSwitch>
                <StatusButton type="button" aria-label="普通视图" $w={28} $on><Sm><K d="M1 2H19V18H1ZM6.500 2V18M6.500 13H19" /></Sm></StatusButton>
                <StatusButton type="button" aria-label="浏览视图" $w={28}><Sm><K d="M2 2H8V8H2ZM12 2H18V8H12ZM2 12H8V18H2ZM12 12H18V18H12Z" /></Sm></StatusButton>
                <StatusButton type="button" aria-label="阅读视图" $w={28}><Sm><K d="M10 18L8 16H1V2H8L10 4L12 2H19V16H12ZM10 4V18" /></Sm></StatusButton>
              </ViewSwitch>
              <Divider $h={29} />
              <PlayGroup>
                <PlayButton type="button" aria-label="放映"><Sm w={12}><K stroke="none" fill="#fff" d="M1 3.500V16.500L12 10Z" /></Sm></PlayButton>
                <Caret />
              </PlayGroup>
              <Divider $h={29} />
              <ZoomTools>
                <Sm color="#46536d"><K d="M1 5V1.500H5M15 1.500H19V5M1 15V18.500H5M15 18.500H19V15M5.500 5.500H14.500V14.500H5.500Z" /></Sm>
                <ZoomSelect aria-label="缩放比例" defaultValue="90"><option value="90">90%</option></ZoomSelect>
                <Caret />
                <StatusButton type="button" aria-label="缩小" $w={20}><Sm w={10} color="#46536d"><K strokeWidth="2" d="M0 10H10" /></Sm></StatusButton>
                <ZoomRange type="range" aria-label="缩放" min="0" max="100" defaultValue="40" />
                <StatusButton type="button" aria-label="放大" $w={10}><Sm w={10} color="#46536d"><K strokeWidth="2" d="M0 10H10M5 5V15" /></Sm></StatusButton>
              </ZoomTools>
            </StatusTools>
          </StatusBar>
          <Meter><MeterBars /></Meter>
        </AppWindow>
        <Meter $page><MeterBars /></Meter>
        <Watermark>
          <MarkWord $x={0} $y={48} $size={78} $latin>Bai</MarkWord>
          <MarkPaw width="106" height="116" viewBox="0 0 106 116" fill="currentColor">
            <path d={circ(14, 44, 13, 17)} />
            <path d={circ(39, 19, 12.5, 18)} />
            <path d={circ(70, 21, 13.5, 17)} />
            <path d={circ(90, 52, 13.5, 17)} />
            <path d="M52 46C60 46 65 50 70 58C75 66 92 76 95 90C98 104 89 114 75 113C65 112 60 111 52 111C44 111 38 114 28 113C12 113 5 100 8 88C12 76 26 68 33 58C38 50 44 46 52 46Z" />
          </MarkPaw>
          <MarkInner $x={144} $y={60} $size={50} $latin>du</MarkInner>
          <MarkWord $x={231} $y={51} $size={59}>经验</MarkWord>
          <MarkUrl>jingyan.baidu.com</MarkUrl>
        </Watermark>
      </Page>
    </>
  );
}
